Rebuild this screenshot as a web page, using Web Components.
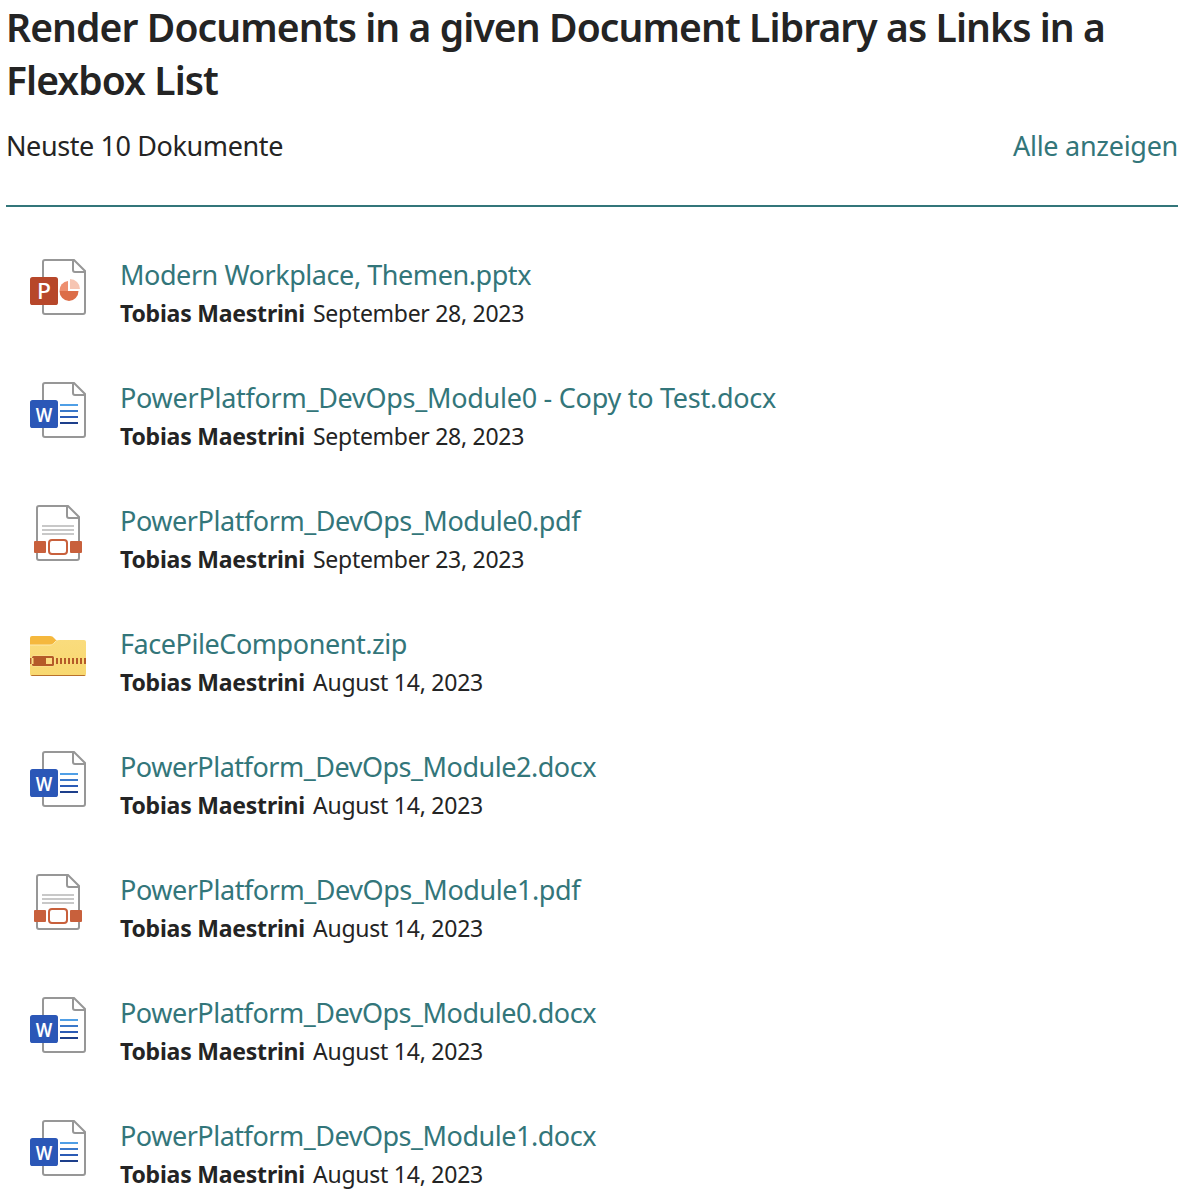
<!DOCTYPE html>
<html lang="de">
<head>
<meta charset="utf-8">
<title>Neuste Dokumente</title>
<style>
html,body{margin:0;background:#fff}
body{font-family:"Segoe UI","Noto Sans","Open Sans",sans-serif;color:#242424;height:1202px;overflow:hidden}
</style>
</head>
<body>
<document-library></document-library>
<script>
/* Text whose tracking is adjusted so the run takes the given width. */
class FitText extends HTMLElement {
  connectedCallback() {
    const root = this.attachShadow({ mode: 'open' });
    root.innerHTML = '<style>:host{display:inline-block;white-space:pre}span{display:inline-block}</style><span><slot></slot></span>';
    const span = root.querySelector('span');
    const gap = (Number(this.getAttribute('width')) - span.getBoundingClientRect().width) / this.textContent.length;
    span.style.letterSpacing = gap.toFixed(4) + 'px';
  }
}

const page = (l, r) => `
  <path d="M${l + 3} 1H${r - 11}L${r} 12V53a2 2 0 0 1-2 2H${l + 2}a2 2 0 0 1-2-2V3a2 2 0 0 1 2-2z" fill="#fff" stroke="#979797" stroke-width="2"/>
  <path d="M${r - 12} 1V11a2 2 0 0 0 2 2H${r}" fill="none" stroke="#979797" stroke-width="2"/>`;
const badge = (color, letter, size, weight, width) => `
  <rect y="18" width="28" height="28" rx="2.6" fill="${color}"/>
  <text x="${14 - width / 2}" y="39.500" textLength="${width}" lengthAdjust="spacingAndGlyphs" font-size="${size}" font-weight="${weight}" fill="#fff">${letter}</text>`;
const icons = {
  pptx: page(13, 55) + `
    <path d="M29.500 32a9.500 9.500 0 0 1 8.500-9.900V32z" fill="#ed8f70"/>
    <path d="M29.500 32H48.500a9.500 10 0 0 1-19 0z" fill="#dc6d48"/>
    <path d="M40 20a10 10 0 0 1 10 10H40z" fill="#f6c5b3"/>` + badge('#b7472a', 'P', 22.5, 500, 14),
  docx: page(13, 55) + `
    <path d="M30 22h18v2H30z" fill="#4f9fe6"/><path d="M30 28h18v2H30z" fill="#3a78c9"/>
    <path d="M30 34h18v2H30z" fill="#2b5bb5"/><path d="M30 40h18v2H30z" fill="#1d3f8b"/>` + badge('#2b57b7', 'W', 20.5, 600, 16.5),
  pdf: page(7, 49) + `
    <path d="M12 20h32v2H12zM12 24h32v2H12zM12 28h32v2H12z" fill="#c8c8c8"/>
    <rect x="16" y="33" width="24" height="18" fill="#fff"/>
    <rect x="4" y="36" width="12" height="12" rx="1" fill="#c8603c"/>
    <rect x="40" y="36" width="12" height="12" rx="1" fill="#c8603c"/>
    <rect x="19" y="35" width="18" height="14" rx="3" fill="#fff" stroke="#c8603c" stroke-width="2"/>`,
  zip: `
    <defs><linearGradient id="g" x2="0" y2="1"><stop stop-color="#fadc7d"/><stop offset="1" stop-color="#f8d870"/></linearGradient></defs>
    <path d="M0 20V10a2 2 0 0 1 2-2H20c2 0 3 .7 4 2l3 3v7z" fill="#f5b83d"/>
    <path d="M0 17H20c2 0 3-1 4-2l2-2c1-.8 2-1 3-1H54a2 2 0 0 1 2 2V46a2 2 0 0 1-2 2H2a2 2 0 0 1-2-2z" fill="url(#g)"/>
    <path d="M0 17H20c2 0 3-1 4-2l2-2" fill="none" stroke="#fdeaae"/>
    <path d="M.7 47c.4.7 1 1 1.700 1H54c.7 0 1.200-.3 1.600-1z" fill="#b9702b"/>
    <path d="M0 30h2v6H0z" fill="#b55b28"/><rect x="1.500" y="27.500" width="23" height="11" rx="2" fill="#fbe39c"/>
    <rect x="2" y="28" width="22" height="10" rx="1.500" fill="#b55b28"/>
    <path d="M2 30h1.500v6H2zM16 30h6v6h-6z" fill="#fbdc80"/>
    <path d="M26 33H56" stroke="#b55b28" stroke-width="6" stroke-dasharray="2 2"/>`
};

class FileIcon extends HTMLElement {
  connectedCallback() {
    this.attachShadow({ mode: 'open' }).innerHTML = `
      <style>:host{display:block;width:56px;height:56px}svg{display:block}</style>
      <svg width="56" height="56" viewBox="0 0 56 56" aria-hidden="true">${icons[this.getAttribute('type')]}</svg>`;
  }
}

class DocumentItem extends HTMLElement {
  connectedCallback() {
    const a = n => this.getAttribute(n);
    this.attachShadow({ mode: 'open' }).innerHTML = `
      <style>
        :host{display:flex;align-items:flex-start;gap:34px;box-sizing:border-box;height:123px;padding:26px 24px 0}
        file-icon{flex:none;margin-top:3px}
        .name{display:block;font-size:27px;line-height:38px;color:#33767a;text-decoration:none;white-space:nowrap}
        .meta{display:flex;gap:8px;font-size:23px;line-height:38px}
        strong{font-weight:700}
      </style>
      <file-icon type="${a('type')}"></file-icon>
      <div>
        <a class="name" href="#"><fit-text width="${a('name-width')}">${a('name')}</fit-text></a>
        <div class="meta"><strong><fit-text width="185">Tobias Maestrini</fit-text></strong><fit-text width="${a('date-width')}">${a('date')}</fit-text></div>
      </div>`;
  }
}

class LibraryHeader extends HTMLElement {
  connectedCallback() {
    this.attachShadow({ mode: 'open' }).innerHTML = `
      <style>
        :host{display:block;border-bottom:2px solid #33767a}
        h1{margin:0;font-size:39px;line-height:53px;font-weight:570}
        h1 fit-text{display:block}
        nav{display:flex;justify-content:space-between;height:80px;padding-top:19px;font-size:27px;line-height:41px}
        a{color:#33767a;text-decoration:none}
      </style>
      <h1><fit-text width="1099">Render Documents in a given Document Library as Links in a</fit-text>
      <fit-text width="212">Flexbox List</fit-text></h1>
      <nav><fit-text width="277">Neuste 10 Dokumente</fit-text><a href="#"><fit-text width="165">Alle anzeigen</fit-text></a></nav>`;
  }
}

class DocumentLibrary extends HTMLElement {
  connectedCallback() {
    const p = 'PowerPlatform_DevOps_Module', s = ['September 28, 2023', 211], g = ['August 14, 2023', 170];
    const rows = [
      ['pptx', 'Modern Workplace, Themen.pptx', 411, s],
      ['docx', p + '0 - Copy to Test.docx', 656, s],
      ['pdf', p + '0.pdf', 460, ['September 23, 2023', 211]],
      ['zip', 'FacePileComponent.zip', 287, g],
      ['docx', p + '2.docx', 476, g],
      ['pdf', p + '1.pdf', 460, g],
      ['docx', p + '0.docx', 476, g],
      ['docx', p + '1.docx', 476, g]
    ];
    this.attachShadow({ mode: 'open' }).innerHTML = `
      <style>:host{display:block;padding:0 14px 0 6px}main{display:flex;flex-direction:column;padding-top:23px}</style>
      <library-header></library-header>
      <main>${rows.map(([t, n, w, d]) => `<document-item type="${t}" name="${n}" name-width="${w}" date="${d[0]}" date-width="${d[1]}"></document-item>`).join('')}</main>`;
  }
}
customElements.define('fit-text', FitText);
customElements.define('file-icon', FileIcon);
customElements.define('document-item', DocumentItem);
customElements.define('library-header', LibraryHeader);
customElements.define('document-library', DocumentLibrary);
</script>
</body>
</html>
